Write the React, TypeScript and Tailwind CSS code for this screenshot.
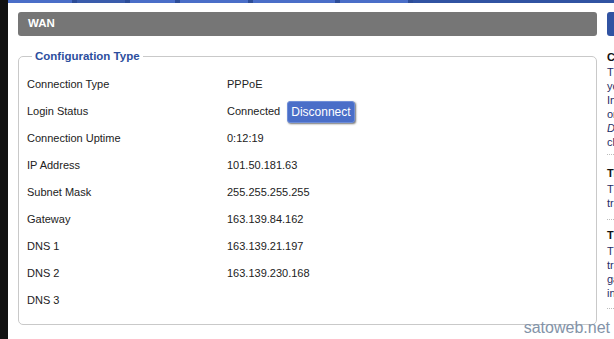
import React from 'react';

const rows: { label: string; value: string; button?: boolean }[] = [
  { label: 'Connection Type', value: 'PPPoE' },
  { label: 'Login Status', value: 'Connected', button: true },
  { label: 'Connection Uptime', value: '0:12:19' },
  { label: 'IP Address', value: '101.50.181.63' },
  { label: 'Subnet Mask', value: '255.255.255.255' },
  { label: 'Gateway', value: '163.139.84.162' },
  { label: 'DNS 1', value: '163.139.21.197' },
  { label: 'DNS 2', value: '163.139.230.168' },
  { label: 'DNS 3', value: '' },
];

// top nav tabs: [width, dark]
const tabs: [number, boolean][] = [
  [64, false],
  [48, true],
  [45, false],
  [68, false],
  [82, false],
  [68, false],
];

export default function App() {
  return (
    <div className="relative flex w-[614px] h-[339px] overflow-hidden bg-white font-['Liberation_Sans',Arial,sans-serif] text-[11px] text-[#222]">
      <div className="w-[8px] shrink-0 bg-[#111]" />
      <div className="flex flex-1 flex-col min-w-0">
        {/* nav strip */}
        <div className="flex h-[3px] bg-[#3153a2]">
          {tabs.map(([w, dark], i) => (
            <div key={i} className="flex">
              <div className={dark ? 'bg-[#3a5cac]' : 'bg-[#4a6ec8]'} style={{ width: w }} />
              <div className="w-[5px] bg-[#2d4d98]" />
            </div>
          ))}
        </div>

        <div className="flex flex-1 pt-[9px] pl-[10px]">
          {/* main panel */}
          <div className="flex w-[579px] shrink-0 flex-col">
            <div className="flex h-[24px] items-center rounded-[3px] bg-[#767676] pl-[10px] text-[11.5px] font-bold text-white">
              WAN
            </div>
            <fieldset className="mt-[13px] rounded-[5px] border border-[#c9c9c9] pl-[8px] pt-[8px] pb-[10px]">
              <legend className="ml-[5px] px-[3px] text-[11.5px] leading-[14px] font-bold text-[#2c4e9e]">
                Configuration Type
              </legend>
              {rows.map((r) => (
                <div key={r.label} className="flex h-[27px] items-center">
                  <div className="w-[200px]">{r.label}</div>
                  <div className="flex items-center gap-[7px]">
                    <span>{r.value}</span>
                    {r.button && (
                      <button className="h-[22px] rounded-[3px] border border-[#6f8ed8] bg-[#4a6ec8] px-[3px] text-[12px] text-white shadow-[1px_1px_2px_rgba(0,0,0,0.55)]">
                        Disconnect
                      </button>
                    )}
                  </div>
                </div>
              ))}
            </fieldset>
          </div>

          {/* help sidebar */}
          <div className="ml-[10px] flex flex-1 flex-col min-w-0">
            <div className="h-[24px] rounded-l-[3px] bg-[#3153a2]" />
            <div className="mt-[14px] whitespace-nowrap leading-[14px]">
              <div className="font-bold text-[#111]">Connection Type</div>
              <div className="mt-[1px] text-[#1f2d66]">
                <div>The connection type used by</div>
                <div>your ISP. Contact your</div>
                <div>Internet Service Provider</div>
                <div>or select</div>
                <div className="italic">Detect</div>
                <div>click Apply.</div>
              </div>
              <div className="mt-[5px] border-t border-dotted border-[#bbb]" />
              <div className="mt-[11px] font-bold text-[#111]">Timeout</div>
              <div className="mt-[2px] text-[#1f2d66]">
                <div>The idle time before</div>
                <div>traffic stops.</div>
              </div>
              <div className="mt-[9px] border-t border-dotted border-[#bbb]" />
              <div className="mt-[8px] font-bold text-[#111]">The Service</div>
              <div className="mt-[2px] text-[#1f2d66]">
                <div>The connection</div>
                <div>traffic from the</div>
                <div>gateway is</div>
                <div>in use.</div>
              </div>
              <div className="mt-[8px] border-t border-dotted border-[#bbb]" />
            </div>
          </div>
        </div>
      </div>

      <div className="absolute right-[4px] bottom-[2px] text-[16px] leading-[18px] text-[#8393a8]">
        satoweb.net
      </div>
    </div>
  );
}
